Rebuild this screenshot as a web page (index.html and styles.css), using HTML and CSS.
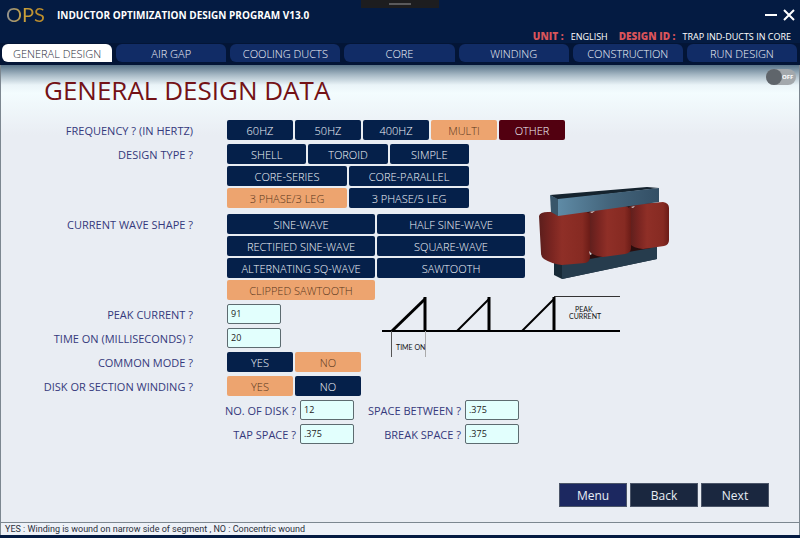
FILE: index.html
```html
<!DOCTYPE html>
<html lang="en">
<head>
  <meta charset="UTF-8" />
  <meta name="viewport" content="width=device-width,initial-scale=1.0" />
  <title>Inductor Optimization Design Program</title>
  <link rel="stylesheet" href="styles.css">
</head>
<body>
  <div class="notch"></div>

  <!-- Title bar -->
  <header class="header">
    <div class="title-bar">
      <span class="logo">OPS</span>
      <span class="app-title">INDUCTOR OPTIMIZATION DESIGN PROGRAM V13.0</span>
      <div class="window-controls">
        <button type="button" class="win-btn" aria-label="Minimize">
          <svg width="14" height="14" viewBox="0 0 14 14"><path d="M1 7H13" /></svg>
        </button>
        <button type="button" class="win-btn" aria-label="Close">
          <svg width="14" height="14" viewBox="0 0 14 14"><path d="M2 2L12 12M12 2L2 12" /></svg>
        </button>
      </div>
    </div>
    <div class="info-bar">
      <span class="info-key">UNIT :</span>
      <span class="info-value">ENGLISH</span>
      <span class="info-key">DESIGN ID :</span>
      <span class="info-value">TRAP IND-DUCTS IN CORE</span>
    </div>
    <nav class="tabs">
      <button type="button" class="tab active">GENERAL DESIGN</button>
      <button type="button" class="tab">AIR GAP</button>
      <button type="button" class="tab">COOLING DUCTS</button>
      <button type="button" class="tab">CORE</button>
      <button type="button" class="tab">WINDING</button>
      <button type="button" class="tab">CONSTRUCTION</button>
      <button type="button" class="tab">RUN DESIGN</button>
    </nav>
  </header>

  <main class="main">
    <div class="heading-row">
      <h1>GENERAL DESIGN DATA</h1>
      <label class="toggle">
        <input type="checkbox" aria-label="Power">
        <span>OFF</span>
      </label>
    </div>

    <form class="form">
      <div class="row">
        <span class="row-label">FREQUENCY ? (IN HERTZ)</span>
        <div class="options">
          <button type="button" class="btn">60HZ</button>
          <button type="button" class="btn">50HZ</button>
          <button type="button" class="btn">400HZ</button>
          <button type="button" class="btn selected">MULTI</button>
          <button type="button" class="btn other">OTHER</button>
        </div>
      </div>

      <!-- Design type + wave shape, with the core drawing on the right -->
      <div class="split">
        <div class="fields">
          <div class="row row-design">
            <span class="row-label">DESIGN TYPE ?</span>
            <div class="options design-options">
              <button type="button" class="btn third">SHELL</button>
              <button type="button" class="btn third">TOROID</button>
              <button type="button" class="btn third">SIMPLE</button>
              <button type="button" class="btn half">CORE-SERIES</button>
              <button type="button" class="btn half">CORE-PARALLEL</button>
              <button type="button" class="btn half selected">3 PHASE/3 LEG</button>
              <button type="button" class="btn half">3 PHASE/5 LEG</button>
            </div>
          </div>
          <div class="row">
            <span class="row-label">CURRENT WAVE SHAPE ?</span>
            <div class="options wave-options">
              <button type="button" class="btn">SINE-WAVE</button>
              <button type="button" class="btn">HALF SINE-WAVE</button>
              <button type="button" class="btn">RECTIFIED SINE-WAVE</button>
              <button type="button" class="btn">SQUARE-WAVE</button>
              <button type="button" class="btn">ALTERNATING SQ-WAVE</button>
              <button type="button" class="btn">SAWTOOTH</button>
              <button type="button" class="btn selected">CLIPPED SAWTOOTH</button>
            </div>
          </div>
        </div>
        <svg class="core" width="132" height="96" viewBox="0 0 132 96">
          <defs>
            <linearGradient id="bar" x1="0" x2="1">
              <stop offset="0" stop-color="#5f8ba6" />
              <stop offset="0.5" stop-color="#44657c" />
              <stop offset="1" stop-color="#334f65" />
            </linearGradient>
            <linearGradient id="coil" x1="0" x2="1">
              <stop offset="0" stop-color="#5c1e1c" />
              <stop offset="0.25" stop-color="#7a2521" />
              <stop offset="0.45" stop-color="#8f2f27" />
              <stop offset="0.85" stop-color="#862a22" />
              <stop offset="1" stop-color="#6b1c17" />
            </linearGradient>
          </defs>
          <!-- bottom yoke -->
          <path d="M15 76L118 54V72L23 92L15 88Z" fill="#172936" />
          <path d="M23 78L118 58V72L23 92Z" fill="#263c4d" />
          <!-- gaps between the legs -->
          <path d="M44 25L112 15V61L50 72Z" fill="#2a0d0d" />
          <!-- coils, back to front -->
          <path d="M90 20Q93 17 101 17L124 15Q130 16 130 21V53Q130 58 125 59L104 62Q94 61 91 57Z" fill="url(#coil)" />
          <path d="M49 26Q52 22 62 22L86 19Q92 20 92 26V61Q92 66 86 67L64 70Q54 69 50 64Z" fill="url(#coil)" />
          <path d="M0 29Q1 25 9 25L45 24Q51 25 51 31V70Q51 75 46 76L23 78Q13 77 5 72Q2 70 2 66Z" fill="url(#coil)" />
          <!-- top yoke -->
          <path d="M11 8L108 0L120 1L19 13Z" fill="#15232e" />
          <path d="M11 8L19 12V29L12 25Z" fill="#39566a" />
          <path d="M19 12L120 1V15L19 29Z" fill="url(#bar)" />
          <path d="M51 25L56 24L53 26ZM92 20L96 19L94 21ZM50 64L53 67L51 68Z" fill="#d5d3d6" />
        </svg>
      </div>

      <!-- Inputs, with the clipped sawtooth diagram on the right -->
      <div class="split">
        <div class="fields">
          <div class="row">
            <label class="row-label" for="peak">PEAK CURRENT ?</label>
            <input class="field" id="peak" type="text" value="91">
          </div>
          <div class="row">
            <label class="row-label" for="timeOn">TIME ON (MILLISECONDS) ?</label>
            <input class="field" id="timeOn" type="text" value="20">
          </div>
          <div class="row">
            <span class="row-label">COMMON MODE ?</span>
            <div class="options">
              <button type="button" class="btn">YES</button>
              <button type="button" class="btn selected">NO</button>
            </div>
          </div>
          <div class="row">
            <span class="row-label">DISK OR SECTION WINDING ?</span>
            <div class="options">
              <button type="button" class="btn selected">YES</button>
              <button type="button" class="btn">NO</button>
            </div>
          </div>
        </div>
        <svg class="waveform" width="240" height="64" viewBox="0 0 240 64">
          <g fill="none" stroke="#000">
            <path d="M0 35H238" stroke-width="2" />
            <path d="M10 35L43 3" stroke-width="3" />
            <path d="M43 1V35" stroke-width="3" />
            <path d="M75 35L107 3" stroke-width="2" />
            <path d="M107 1V35" stroke-width="3" />
            <path d="M140 35L172 3" stroke-width="2" />
            <path d="M172 1V35" stroke-width="3" />
            <path d="M172 0.500H238" stroke="#333" />
            <path d="M9.500 35V61" stroke="#555" />
            <path d="M43.500 35V61" stroke="#aaa" />
          </g>
          <text x="14" y="54">TIME ON</text>
          <text x="193" y="16">PEAK</text>
          <text x="187" y="23">CURRENT</text>
        </svg>
      </div>

      <div class="sub-fields">
        <label for="disks">NO. OF DISK ?</label>
        <input class="field" id="disks" type="text" value="12">
        <label for="between">SPACE BETWEEN ?</label>
        <input class="field" id="between" type="text" value=".375">
        <label for="tap">TAP SPACE ?</label>
        <input class="field" id="tap" type="text" value=".375">
        <label for="break">BREAK SPACE ?</label>
        <input class="field" id="break" type="text" value=".375">
      </div>
    </form>

    <div class="actions">
      <button type="button" class="action menu">Menu</button>
      <button type="button" class="action">Back</button>
      <button type="button" class="action">Next</button>
    </div>
  </main>

  <footer class="status">YES : Winding is wound on narrow side of segment , NO : Concentric wound</footer>
</body>
</html>
```
FILE: styles.css
```css
* {
  box-sizing: border-box;
}

body {
  margin: 0;
  min-height: 100vh;
  display: flex;
  flex-direction: column;
  background-color: #041b42;
  font-family: "Open Sans", "Noto Sans", sans-serif;
  font-size: 11px;
}

button, input {
  font-family: inherit;
  font-size: 11px;
  margin: 0;
  padding: 0;
  border: none;
}

/* Header */
.header {
  color: #fff;
}
.notch {
  position: absolute;
  top: 0;
  left: 50%;
  width: 78px;
  height: 8px;
  margin-left: -39px;
  background-color: #1d1d1f;
}
.notch::after {
  content: "";
  display: block;
  width: 22px;
  height: 2px;
  margin: 3px auto;
  background-color: #5a5a5c;
}
.title-bar {
  display: flex;
  align-items: center;
  height: 29px;
  padding: 0 4px 0 6px;
}
.logo {
  width: 51px;
  font-family: Lato, sans-serif;
  font-size: 20px;
  line-height: 29px;
  background: linear-gradient(90deg, #8d9093, #c9a03a 35%, #b98a2c 65%, #d8a728);
  background-clip: text;
  -webkit-background-clip: text;
  color: transparent;
}
.app-title {
  font-weight: 700;
  font-size: 10px;
}
.window-controls {
  margin-left: auto;
  display: flex;
  gap: 4px;
}
.win-btn {
  display: flex;
  background: none;
}
.win-btn svg {
  fill: none;
  stroke: #fff;
  stroke-width: 2;
}
.info-bar {
  display: flex;
  justify-content: flex-end;
  align-items: center;
  height: 14px;
  padding-right: 9px;
  font-size: 9px;
}
.info-key {
  margin-right: 7px;
  font-size: 10px;
  font-weight: 800;
  color: #d9545a;
}
.info-value + .info-key {
  margin-left: 11px;
}
.tabs {
  display: grid;
  grid-template-columns: repeat(7, 1fr);
  gap: 4px;
  padding: 1px 3px 3px 2px;
  background-color: #031536;
}
.tab {
  height: 18px;
  border-radius: 6px 6px 0 6px;
  background-color: #112c66;
  color: #f2f5fb;
  font-weight: 300;
}
.tab.active {
  background-color: #fff;
  color: #1f2a3a;
}

/* Main panel */
.main {
  flex: 1;
  display: flex;
  flex-direction: column;
  border-left: 1px solid #7c8790;
  border-right: 1px solid #7c8790;
  background: linear-gradient(#587388 0, #a7b9c5 10px, #eaf4f8 20px, #f3fcfe 28px, #e9edf3 70px);
}
.heading-row {
  display: flex;
  justify-content: space-between;
  align-items: flex-start;
  padding: 0 3px 4px 43px;
}
h1 {
  margin: 0;
  font-size: 26px;
  font-weight: 400;
  line-height: 51px;
  color: #741216;
}
.toggle {
  display: flex;
  align-items: center;
  width: 30px;
  height: 16px;
  margin-top: 4px;
  border-radius: 8px;
  background-color: #a3a8ac;
  color: #fff;
  font-size: 6px;
  font-weight: 700;
}
.toggle input {
  appearance: none;
  width: 16px;
  height: 16px;
  border-radius: 50%;
  background-color: #5f656b;
}

/* Form rows */
.form, .fields {
  display: flex;
  flex-direction: column;
  gap: 4px;
}
.split {
  display: flex;
  align-items: flex-start;
}
.row {
  display: flex;
  gap: 34px;
}
.row-design {
  margin-bottom: 2px;
}
.row-label {
  width: 192px;
  text-align: right;
}
.row-label, .sub-fields label {
  line-height: 22px;
  height: 20px;
  color: #35397c;
  white-space: nowrap;
}
.options {
  display: flex;
  gap: 2px;
}
.btn {
  width: 66px;
  height: 20px;
  border-radius: 2px;
  background-color: #05204a;
  color: #f4f7fc;
  font-weight: 300;
  white-space: nowrap;
}
.btn.selected {
  background-color: #eda46f;
  color: #57351c;
}
.btn.other {
  background-color: #520010;
}
.design-options, .wave-options {
  display: grid;
}
.design-options {
  width: 242px;
  grid-template-columns: repeat(6, 1fr);
}
.wave-options {
  width: 298px;
  grid-template-columns: repeat(2, 1fr);
}
.design-options .btn, .wave-options .btn {
  width: auto;
}
.third {
  grid-column: span 2;
}
.half {
  grid-column: span 3;
}
.field {
  width: 54px;
  height: 20px;
  padding: 0 3px 2px;
  border: 1px solid #5d6b70;
  border-radius: 2px;
  background-color: #e2fffd;
  color: #222;
  font-size: 9px;
}
.sub-fields {
  display: grid;
  grid-template-columns: 103px 54px 103px 54px;
  gap: 4px;
  padding-left: 192px;
}
.sub-fields label {
  text-align: right;
}

/* Drawings */
.core {
  align-self: flex-end;
  margin: 0 0 17px 14px;
}
.waveform {
  margin: -8px 0 0 21px;
}
.waveform text {
  font-family: Lato, sans-serif;
  font-size: 7px;
  fill: #111;
}

/* Bottom buttons and status line */
.actions {
  display: flex;
  justify-content: flex-end;
  gap: 3px;
  margin-top: auto;
  padding: 0 30px 15px;
}
.action {
  width: 68px;
  height: 24px;
  border: 1px solid #4b5568;
  background-color: #1a273f;
  color: #e8edf5;
  font-size: 12px;
}
.action.menu {
  background-color: #1c2860;
}
.status {
  padding: 0 4px;
  border: 1px solid #7c8790;
  border-bottom: none;
  margin-bottom: 3px;
  background-color: #edf1f7;
  color: #2a2f3a;
  font-family: Roboto, sans-serif;
  font-size: 9px;
  line-height: 12px;
}
```
